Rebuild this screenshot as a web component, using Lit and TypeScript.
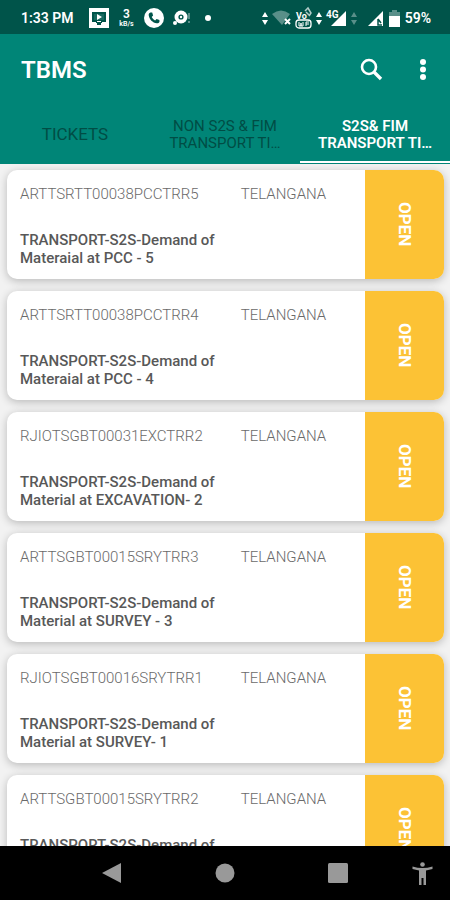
import { LitElement, html, css, svg } from "lit";
import { customElement, property, state } from "lit/decorators.js";
import { classMap } from "lit/directives/class-map.js";

interface Ticket {
  id: string;
  region: string;
  title: string;
  detail: string;
}

const TICKETS: Ticket[] = [
  { id: "ARTTSRTT00038PCCTRR5", region: "TELANGANA", title: "TRANSPORT-S2S-Demand of", detail: "Materaial at PCC - 5" },
  { id: "ARTTSRTT00038PCCTRR4", region: "TELANGANA", title: "TRANSPORT-S2S-Demand of", detail: "Materaial at PCC - 4" },
  { id: "RJIOTSGBT00031EXCTRR2", region: "TELANGANA", title: "TRANSPORT-S2S-Demand of", detail: "Material at EXCAVATION- 2" },
  { id: "ARTTSGBT00015SRYTRR3", region: "TELANGANA", title: "TRANSPORT-S2S-Demand of", detail: "Material at SURVEY - 3" },
  { id: "RJIOTSGBT00016SRYTRR1", region: "TELANGANA", title: "TRANSPORT-S2S-Demand of", detail: "Material at SURVEY- 1" },
  { id: "ARTTSGBT00015SRYTRR2", region: "TELANGANA", title: "TRANSPORT-S2S-Demand of", detail: "Material at SURVEY - 2" },
];

const TABS = [["TICKETS"], ["NON S2S & FIM", "TRANSPORT TI…"], ["S2S& FIM", "TRANSPORT TI…"]];

const arrows = svg`<path d="M3 0L6 5H0zM3 13L0 8h6z"/>`;

@customElement("status-bar")
class StatusBar extends LitElement {
  static styles = css`
    :host {
      display: flex;
      justify-content: space-between;
      align-items: center;
      height: 34px;
      padding: 2px 19px 0 21px;
      box-sizing: border-box;
      background: #00544a;
      color: #fff;
      font-size: 14px;
      font-weight: 600;
    }
    .group {
      display: flex;
      align-items: center;
    }
    .left {
      gap: 9px;
    }
    .right {
      gap: 4px;
    }
    .time {
      width: 59px;
      white-space: nowrap;
    }
    svg {
      display: block;
      fill: #fff;
      overflow: visible;
    }
    text {
      font-family: Roboto, sans-serif;
      font-weight: 700;
    }
    .rate {
      display: flex;
      flex-direction: column;
      align-items: center;
      width: 17px;
      font-size: 12px;
      line-height: 12px;
    }
    .unit {
      font-size: 7px;
      line-height: 9px;
    }
    .dim {
      opacity: 0.35;
    }
  `;

  render() {
    return html`
      <div class="group left">
        <span class="time">1:33 PM</span>
        <svg width="20" height="20" viewBox="0 0 20 20">
          <rect width="20" height="20" />
          <path d="M3 4h14v10h-4v1h-1v2H8v-2H7v-1H3z" fill="#00544a" />
          <path d="M5 6h10v6H5z" fill="#17695f" />
          <path d="M8 6l5 3-5 3zM8 13h4v1H8z" />
        </svg>
        <span class="rate"><span>3</span><span class="unit">kB/s</span></span>
        <svg width="20" height="20" viewBox="0 0 20 20">
          <circle cx="10" cy="10" r="10" />
          <path
            fill="#00544a"
            d="M6.400 4.500l1.800.1.900 2.900-1.400 1.500c.8 1.500 1.900 2.600 3.400 3.400l1.500-1.400 2.800.9.100 1.900c-.5 1.200-1.600 1.600-2.700 1.500-4.300-.7-7.400-3.800-8.100-8.100-.1-1.200.5-2.300 1.700-2.700z"
          />
        </svg>
        <svg width="18" height="18" viewBox="0 0 18 18">
          <circle cx="8" cy="8" r="6.500" />
          <circle cx="2" cy="14" r="2" />
          <circle cx="8" cy="8" r="2.600" fill="#00544a" />
          <circle cx="8" cy="8" r="1.200" />
          <path d="M15 4h2v6h-2zM15 12h2v2h-2z" class="dim" />
        </svg>
        <svg width="22" height="6" viewBox="0 0 22 6"><circle cx="8" cy="3" r="3" /></svg>
      </div>
      <div class="group right">
        <svg width="6" height="13" viewBox="0 0 6 13">${arrows}</svg>
        <svg width="19" height="16" viewBox="0 0 19 16">
          <path class="dim" d="M0 4Q9 -3 18 4L10 15z" />
          <path d="M13 9l5 5M18 9l-5 5" stroke="#fff" stroke-width="2" />
        </svg>
        <svg width="17" height="21" viewBox="0 0 17 21">
          <text x="1" y="11" font-size="9">Vo</text>
          <path d="M10 3l3-3 3 5-2 3M11 4l3 3" fill="none" stroke="#b2cbc8" stroke-width="1.500" />
          <rect x="1" y="12" width="15" height="8" rx="3" fill="none" stroke="#fff" stroke-width="1.300" />
          <path d="M4 14v4h2v-3 3h2v-4M11 14v4M11 16h3M11 14h3" fill="none" stroke="#fff" />
        </svg>
        <svg width="6" height="13" viewBox="0 0 6 13">${arrows}</svg>
        <svg width="21" height="17" viewBox="0 0 21 17">
          <path d="M20 1v15H5z" />
          <text x="0" y="8" font-size="10" stroke="#00544a" stroke-width="1.500" paint-order="stroke">4G</text>
        </svg>
        <svg class="dim" width="6" height="13" viewBox="0 0 6 13">${arrows}</svg>
        <svg width="24" height="17" viewBox="0 0 24 17">
          <path d="M22 1v15H7z" />
          <path d="M17 9l3 4M17 9v6h4" fill="none" stroke="#00544a" stroke-width="1.500" />
        </svg>
        <svg width="12" height="17" viewBox="0 0 12 17">
          <path class="dim" d="M3 0h5v2h3v5H0V2h3z" />
          <path d="M0 6h11v11H0z" />
        </svg>
        <span>59%</span>
      </div>
    `;
  }
}

@customElement("app-header")
class AppHeader extends LitElement {
  @state() private active = 2;

  static styles = css`
    :host {
      display: block;
      background: #008577;
      color: #fff;
    }
    .bar {
      display: flex;
      align-items: center;
      gap: 28px;
      height: 72px;
      padding: 0 15px 0 21px;
    }
    h1 {
      flex: 1;
      margin: 0;
      font-size: 24px;
      line-height: 28px;
      font-weight: 600;
    }
    button {
      padding: 0;
      border: 0;
      background: none;
      color: inherit;
      font-family: inherit;
    }
    .icon {
      display: grid;
      place-items: center;
      width: 24px;
      height: 32px;
    }
    svg {
      fill: #fff;
      overflow: visible;
    }
    .tabs {
      display: grid;
      grid-template-columns: repeat(3, 1fr);
      height: 57px;
      padding-bottom: 1px;
    }
    .tab {
      display: flex;
      flex-direction: column;
      align-items: center;
      justify-content: center;
      border-bottom: 2px solid transparent;
      padding-top: 2px;
      font-size: 15px;
      line-height: 17px;
      color: #004d45;
      font-weight: 400;
    }
    .single {
      font-size: 17px;
    }
    .active {
      color: #fff;
      border-color: #fff;
      font-weight: 600;
    }
  `;

  render() {
    return html`
      <div class="bar">
        <h1>TBMS</h1>
        <button class="icon" aria-label="Search">
          <svg width="24" height="24" viewBox="0 0 24 24">
            <circle cx="10" cy="9" r="7" fill="none" stroke="#fff" stroke-width="2.600" />
            <path d="M15 14l7 7" stroke="#fff" stroke-width="3.400" />
          </svg>
        </button>
        <button class="icon" aria-label="More options">
          <svg width="6" height="22" viewBox="0 0 6 22">
            <circle cx="3" cy="3" r="3" />
            <circle cx="3" cy="10.500" r="3" />
            <circle cx="3" cy="18" r="3" />
          </svg>
        </button>
      </div>
      <div class="tabs" role="tablist">
        ${TABS.map(
          (lines, i) => html`
            <button
              role="tab"
              aria-selected=${i === this.active}
              class=${classMap({ tab: true, single: lines.length === 1, active: i === this.active })}
              @click=${() => (this.active = i)}
            >
              ${lines.map((line) => html`<span>${line}</span>`)}
            </button>
          `,
        )}
      </div>
    `;
  }
}

@customElement("ticket-card")
class TicketCard extends LitElement {
  @property({ attribute: false }) ticket!: Ticket;

  static styles = css`
    :host {
      display: flex;
      flex: none;
      min-height: 109px;
      border-radius: 10px;
      overflow: hidden;
      background: #fff;
      box-shadow: 0 2px 8px rgba(0, 0, 0, 0.24);
    }
    .body {
      flex: 1;
      display: grid;
      grid-template-columns: 16fr 9fr;
      align-content: start;
      row-gap: 28px;
      padding: 15px 0 0 13px;
    }
    .meta {
      font-size: 15px;
      line-height: 18px;
      font-weight: 300;
      color: #6a6a6a;
    }
    .title {
      font-size: 15px;
      line-height: 18px;
      font-weight: 500;
      color: #585858;
    }
    .title span {
      display: block;
      white-space: nowrap;
    }
    .status {
      width: 79px;
      padding: 0;
      border: 0;
      background: #fcc235;
      color: #fff;
      font: 700 17px/20px Roboto, sans-serif;
      writing-mode: vertical-rl;
      text-align: center;
    }
  `;

  render() {
    const t = this.ticket;
    return html`
      <div class="body">
        <span class="meta">${t.id}</span>
        <span class="meta">${t.region}</span>
        <div class="title"><span>${t.title}</span><span>${t.detail}</span></div>
      </div>
      <button class="status">OPEN</button>
    `;
  }
}

@customElement("nav-bar")
class NavBar extends LitElement {
  static styles = css`
    :host {
      display: grid;
      grid-template-columns: repeat(3, 1fr);
      align-items: center;
      position: relative;
      height: 54px;
      padding: 0 56px;
      background: #000;
    }
    button {
      display: grid;
      place-items: center;
      padding: 0;
      border: 0;
      background: none;
    }
    .assist {
      position: absolute;
      right: 17px;
      top: 16px;
    }
    svg {
      display: block;
      fill: #999;
    }
  `;

  render() {
    return html`
      <button aria-label="Back"><svg width="20" height="22" viewBox="0 0 20 22"><path d="M0 11L19 1v20z" /></svg></button>
      <button aria-label="Home"><svg width="20" height="20" viewBox="0 0 20 20"><circle cx="10" cy="10" r="9.500" /></svg></button>
      <button aria-label="Recent apps"><svg width="20" height="20" viewBox="0 0 20 20"><rect width="20" height="20" rx="1.500" /></svg></button>
      <button class="assist" aria-label="Accessibility">
        <svg width="21" height="23" viewBox="0 0 21 23">
          <circle cx="10.500" cy="2.500" r="2.300" />
          <path d="M.5 4.500Q10.500 7.500 20.500 4.500V7L14 8.500V23h-2.500v-7h-2v7H7V8.500L.5 7z" />
        </svg>
      </button>
    `;
  }
}

@customElement("app-root")
class AppRoot extends LitElement {
  static styles = css`
    :host {
      display: flex;
      flex-direction: column;
      height: 100vh;
      overflow: hidden;
      font-family: Roboto, sans-serif;
      background: #f2f2f2;
    }
    status-bar,
    app-header,
    nav-bar {
      flex: none;
    }
    main {
      flex: 1;
      min-height: 0;
      display: flex;
      flex-direction: column;
      gap: 12px;
      padding: 6px 6px 0 7px;
      overflow: hidden;
      background: #f2f2f2;
    }
  `;

  render() {
    return html`
      <status-bar></status-bar>
      <app-header></app-header>
      <main>${TICKETS.map((t) => html`<ticket-card .ticket=${t}></ticket-card>`)}</main>
      <nav-bar></nav-bar>
    `;
  }
}
